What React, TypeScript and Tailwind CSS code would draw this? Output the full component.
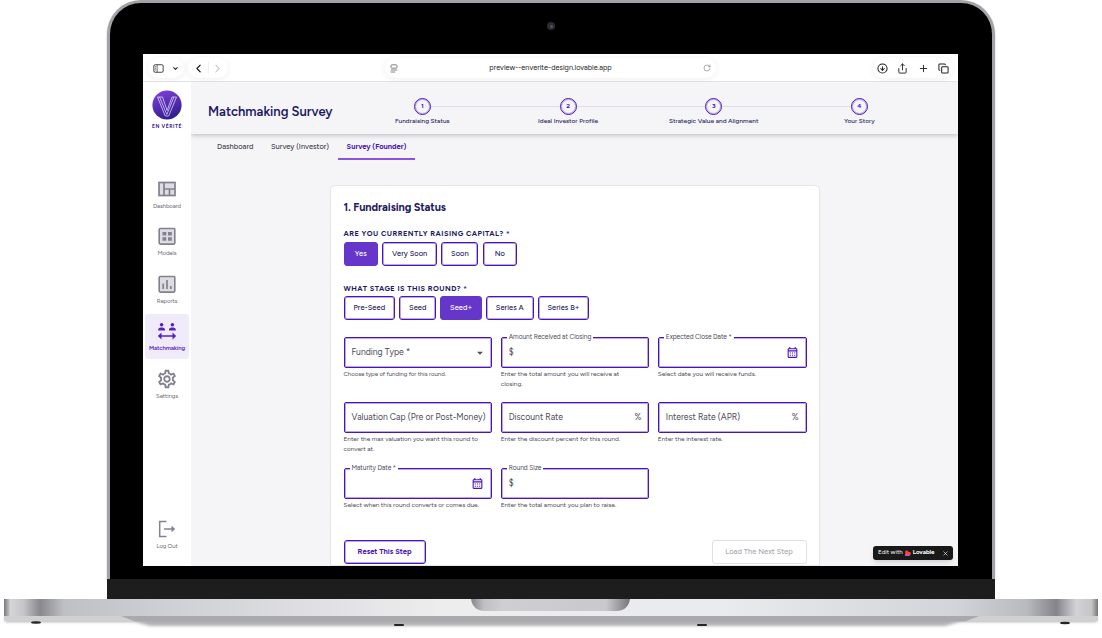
import type { ReactNode } from 'react';
import clsx from 'clsx';
import {
  ChevronDown,
  ChevronLeft,
  ChevronRight,
  CircleArrowDown,
  Copy,
  Plus,
  RotateCw,
  Share,
  X,
} from 'lucide-react';
import { MdArrowDropDown, MdOutlineCalendarMonth, MdOutlineSettings } from 'react-icons/md';

const QuiltIcon = () => (
  <svg viewBox="0 0 18 16" className="h-4 w-[18px]">
    <rect x="1" y="1.5" width="16" height="13" fill="#dcdce2" stroke="#83818f" strokeWidth="1.7" />
    <path d="M6 1.5v13M6 8h11M11.5 8v6.5" stroke="#83818f" strokeWidth="1.7" />
  </svg>
);

const ModelsIcon = () => (
  <svg viewBox="0 0 18 18" className="h-[18px] w-[18px]">
    <rect x="1.2" y="1.5" width="15.6" height="15.6" rx="1" fill="#dcdce2" stroke="#83818f" strokeWidth="1.6" />
    <path d="M4.5 5h3.8v3.5H4.5zM10 5h3.8v3.5H10zM4.5 10.300h3.800v3.500H4.500zM10 10.300h3.800v3.500H10z" fill="#83818f" />
  </svg>
);

const ReportsIcon = () => (
  <svg viewBox="0 0 18 18" className="h-[18px] w-[18px]">
    <rect x="1.2" y="1.5" width="15.6" height="15.6" rx="1" fill="#dcdce2" stroke="#83818f" strokeWidth="1.6" />
    <path d="M5.200 14V8.500M9 14V5M12.800 14v-3" stroke="#83818f" strokeWidth="1.700" />
  </svg>
);

const MatchIcon = () => (
  <svg viewBox="0 0 20 18" className="h-[18px] w-5" fill="#5b1fc0">
    <circle cx="4.6" cy="2.8" r="1.8" />
    <circle cx="15.4" cy="2.8" r="1.8" />
    <path d="M1.2 8.500V7.600C1.200 6.100 3.200 5.600 4.600 5.600S8 6.100 8 7.600v.9zM12 8.500v-.9c0-1.500 2-2 3.400-2s3.400.5 3.400 2v.9z" />
    <path d="M4.500 10.600v2.600h11v-2.600l3.700 3.400-3.700 3.400v-2.600h-11v2.600L.8 14z" />
  </svg>
);

const LogOutIcon = () => (
  <svg viewBox="0 0 18 18" className="h-[18px] w-[18px]" fill="none" stroke="#83818f" strokeWidth="1.500">
    <path d="M8.500 1.500H1.700v15h6.800M6 9h9.500" />
    <path d="M13.500 5.800L17.200 9l-3.700 3.200z" fill="#83818f" stroke="none" />
  </svg>
);

const navItems = [
  { label: 'Dashboard', icon: <QuiltIcon /> },
  { label: 'Models', icon: <ModelsIcon /> },
  { label: 'Reports', icon: <ReportsIcon /> },
  { label: 'Matchmaking', icon: <MatchIcon />, active: true },
  { label: 'Settings', icon: <MdOutlineSettings size={22} color="#83818f" /> },
];

const steps = ['Fundraising Status', 'Ideal Investor Profile', 'Strategic Value and Alignment', 'Your Story'];

const raising = [
  { label: 'Yes', width: 'w-[34.5px]', active: true },
  { label: 'Very Soon', width: 'w-[55px]' },
  { label: 'Soon', width: 'w-[37px]' },
  { label: 'No', width: 'w-[34.5px]' },
];

const stages = [
  { label: 'Pre-Seed', width: 'w-[51.5px]' },
  { label: 'Seed', width: 'w-[37px]' },
  { label: 'Seed+', width: 'w-[41.5px]', active: true },
  { label: 'Series A', width: 'w-[47.5px]' },
  { label: 'Series B+', width: 'w-[51.5px]' },
];

const Calendar = () => <MdOutlineCalendarMonth size={13} color="#4a14bd" />;

const fields = [
  {
    placeholder: 'Funding Type *',
    end: <MdArrowDropDown size={14} />,
    help: 'Choose type of funding for this round.',
    tightHelp: true,
  },
  { label: 'Amount Received at Closing', start: '$', help: 'Enter the total amount you will receive at closing.' },
  { label: 'Expected Close Date *', end: <Calendar />, help: 'Select date you will receive funds.' },
  { placeholder: 'Valuation Cap (Pre or Post-Money)', help: 'Enter the max valuation you want this round to convert at.' },
  { placeholder: 'Discount Rate', end: '%', help: 'Enter the discount percent for this round.' },
  { placeholder: 'Interest Rate (APR)', end: '%', help: 'Enter the interest rate.' },
  { label: 'Maturity Date *', end: <Calendar />, help: 'Select when this round converts or comes due.' },
  { label: 'Round Size', start: '$', help: 'Enter the total amount you plan to raise.' },
];

function BrowserBar() {
  return (
    <div className="flex h-7 shrink-0 items-center border-b border-[#e3e3e6] bg-white px-[5px] pt-px text-[#222]">
      <div className="flex h-5 w-[36px] items-center justify-between rounded-full px-[5px] shadow-[0_1px_6px_rgba(0,0,0,0.07)]">
        <svg viewBox="0 0 12 10" className="h-[9px] w-[11px]" fill="none" stroke="#333" strokeWidth="1">
          <rect x="0.8" y="0.8" width="10.4" height="8.4" rx="1.5" />
          <path d="M4.5 1v8M2 3h1.200M2 4.800h1.200M2 6.600h1.200" strokeWidth="0.800" />
        </svg>
        <ChevronDown size={7} strokeWidth={3.5} />
      </div>
      <div className="ml-1 flex h-5 w-10 items-center justify-between rounded-full px-1 shadow-[0_1px_6px_rgba(0,0,0,0.07)]">
        <ChevronLeft size={13} strokeWidth={2.2} />
        <span className="h-3 w-px bg-[#f0f0f0]" />
        <ChevronRight size={13} strokeWidth={1.8} className="text-[#aaa]" />
      </div>
      <div className="ml-[157px] flex h-5 w-[331px] items-center justify-between rounded-full px-[5px] shadow-[0_1px_7px_rgba(0,0,0,0.07)]">
        <svg viewBox="0 0 8 9" className="h-[9px] w-2" fill="none" stroke="#777" strokeWidth="0.9">
          <rect x="1" y="0.8" width="6" height="3.4" rx="0.8" />
          <path d="M0.7 6h6.600M0.700 8h4.500" />
        </svg>
        <span className="text-[7.3px] tracking-[0.02px] text-[#222]">preview--enverite-design.lovable.app</span>
        <RotateCw size={8} strokeWidth={1.8} className="text-[#777]" />
      </div>
      <div className="ml-auto flex h-5 w-20 items-center justify-between rounded-full px-1 shadow-[0_1px_6px_rgba(0,0,0,0.07)]">
        <CircleArrowDown size={11} strokeWidth={2.2} />
        <Share size={11} strokeWidth={2} />
        <Plus size={11} strokeWidth={2} />
        <Copy size={11} strokeWidth={2.2} />
      </div>
    </div>
  );
}

function Logo() {
  return (
    <div className="flex h-[89.5px] flex-col items-center pt-2">
      <svg viewBox="0 0 30 30" className="h-[30px] w-[30px]">
        <defs>
          <linearGradient id="logo" x1="0.3" y1="0" x2="0.7" y2="1">
            <stop offset="0" stopColor="#7c3fd6" />
            <stop offset="1" stopColor="#2b1a8c" />
          </linearGradient>
        </defs>
        <circle cx="15" cy="15" r="14.6" fill="url(#logo)" />
        <path
          d="M5.500 7h5l4.600 13.500L20 7h4.500l-7.800 19h-3.500zM7.500 7l7.300 17.500L21.900 7"
          fill="none"
          stroke="#e4dafa"
          strokeWidth="0.75"
        />
      </svg>
      <span className="mt-[3px] text-[5px] leading-[6px] font-bold tracking-[0.55px] text-[#3c2391]">EN VÉRITÉ</span>
    </div>
  );
}

function NavItem({ label, icon, active }: { label: string; icon: ReactNode; active?: boolean }) {
  return (
    <div
      className={clsx(
        'flex h-[45px] w-11 flex-col items-center rounded-[3px] pt-[6px]',
        active ? 'bg-[#f0ebf8] font-semibold text-[#5b1fc0]' : 'text-[#6c6a76]'
      )}
    >
      <div className="flex h-[22px] items-center">{icon}</div>
      <span className="mt-[2px] text-[6px] leading-[8px] tracking-[-0.1px]">{label}</span>
    </div>
  );
}

function Sidebar() {
  return (
    <div className="flex w-12 shrink-0 flex-col items-center bg-white">
      <Logo />
      <div className="flex flex-col gap-[2.6px]">
        {navItems.map((item) => (
          <NavItem key={item.label} {...item} />
        ))}
      </div>
      <div className="mt-auto mb-[9px]">
        <NavItem label="Log Out" icon={<LogOutIcon />} />
      </div>
    </div>
  );
}

function Header() {
  return (
    <div className="z-10 flex h-[52px] shrink-0 items-center bg-[#f5f5f8] pl-[17px] shadow-[0_1px_5px_rgba(0,0,0,0.25)]">
      <h1 className="w-[141.5px] pt-[8px] text-[13px] font-semibold whitespace-nowrap text-[#1d1a63]">
        Matchmaking Survey
      </h1>
      <div className="flex">
        {steps.map((step, i) => (
          <div key={step} className="flex w-[145.7px] flex-col items-center pt-[8px]">
            <div className="flex w-full items-center">
              <span className={clsx('h-px flex-1', i > 0 && 'bg-[#dddde3]')} />
              <span className="flex h-[17px] w-[17px] items-center justify-center rounded-full border border-[#4a14bd] text-[6.5px] font-bold text-[#4a14bd] shadow-[inset_0_0_0_1px_#4a14bd50]">
                {i + 1}
              </span>
              <span className={clsx('h-px flex-1', i < 3 && 'bg-[#dddde3]')} />
            </div>
            <span className="mt-[1.5px] text-[6.52px] leading-[9px] font-medium whitespace-nowrap text-[#1d1a63]">
              {step}
            </span>
          </div>
        ))}
      </div>
    </div>
  );
}

function Tabs() {
  return (
    <div className="flex h-[26px] shrink-0 pl-[18px] text-[7.5px] font-medium text-[#44434f]">
      <span className="w-[53px] pt-[7px] pl-2">Dashboard</span>
      <span className="w-[76px] pt-[7px] pl-[9px]">Survey (Investor)</span>
      <span className="w-[77px] border-b-2 border-[#8a55dc] pt-[7px] text-center font-bold tracking-[-0.01px] text-[#4a14bd]">
        Survey (Founder)
      </span>
    </div>
  );
}

function Choices({ items }: { items: { label: string; width: string; active?: boolean }[] }) {
  return (
    <div className="flex gap-[4.2px]">
      {items.map((item) => (
        <button
          key={item.label}
          className={clsx(
            'h-6 shrink-0 rounded-[3px] border text-[7.5px] font-medium tracking-[0.03px] whitespace-nowrap',
            item.width,
            item.active
              ? 'border-[#6236c8] bg-[#6636ca] text-white'
              : 'border-[#4a14bd] text-[#1d1a63] shadow-[inset_0_0_0_1px_#4a14bd60]'
          )}
        >
          {item.label}
        </button>
      ))}
    </div>
  );
}

type FieldProps = {
  label?: string;
  placeholder?: string;
  start?: string;
  end?: ReactNode;
  help: string;
  tightHelp?: boolean;
};

function Field({ label, placeholder, start, end, help, tightHelp }: FieldProps) {
  return (
    <div className="text-[#4c4a58]">
      <div className="relative flex h-[31px] items-center justify-between rounded-[2px] border border-[#4a14bd] px-[7px] text-[8.65px] whitespace-nowrap shadow-[inset_0_0_0_1px_#4a14bd60]">
        {label && (
          <span className="absolute -top-[6px] left-[5px] bg-white px-[2px] text-[6.6px] leading-[10px] tracking-[-0.05px]">
            {label}
          </span>
        )}
        <span>{placeholder ?? start}</span>
        <span className={clsx(end !== '%' && '-mr-[3px]', label && 'mr-0')}>{end}</span>
      </div>
      <p
        className={clsx(
          'mt-px pr-3 leading-[10px]',
          tightHelp ? 'text-[6.1px] tracking-[-0.05px]' : 'text-[6.5px] tracking-[-0.02px]'
        )}
      >
        {help}
      </p>
    </div>
  );
}

function SurveyCard() {
  return (
    <div className="mt-[25px] ml-[139px] flex h-[400px] w-[490px] flex-col rounded-t-[5px] border border-[#e4e4ec] bg-white px-[12.5px] pt-[13px]">
      <h2 className="h-[29px] text-[11px] leading-[18px] font-bold tracking-[-0.08px] text-[#1d1a63]">
        1. Fundraising Status
      </h2>
      <p className="h-[14px] text-[7.4px] leading-[12px] font-bold tracking-[0.47px] text-[#1d1a63]">
        ARE YOU CURRENTLY RAISING CAPITAL? *
      </p>
      <Choices items={raising} />
      <p className="mt-[17px] h-[13px] text-[7.4px] leading-[12px] font-bold tracking-[0.47px] text-[#1d1a63]">
        WHAT STAGE IS THIS ROUND? *
      </p>
      <Choices items={stages} />
      <div className="mt-[17px] grid auto-rows-[65.3px] grid-cols-3 gap-x-[8.5px]">
        {fields.map((field) => (
          <Field key={field.help} {...field} />
        ))}
      </div>
      <div className="mt-[7px] flex justify-between text-[7.55px]">
        <button className="h-6 w-[82px] rounded-[3px] border border-[#4a14bd] font-bold text-[#4a14bd] shadow-[inset_0_0_0_1px_#4a14bd60]">
          Reset This Step
        </button>
        <button className="h-6 w-[95px] rounded-[3px] border border-[#e0e0e3] font-medium text-[#aaaab0]">
          Load The Next Step
        </button>
      </div>
    </div>
  );
}

function LovableBadge() {
  return (
    <div className="absolute right-[5px] bottom-[6px] flex h-[14px] w-20 items-center rounded-[3px] bg-[#191919] pl-[5px] text-[6.2px] text-white shadow-md">
      <span>Edit with</span>
      <svg viewBox="0 0 6 6" className="mr-[1.5px] ml-[2.5px] h-[6px] w-[6px]">
        <path d="M0.3 6V1.500C0.300 0 3 0 3.200 1.800 5 1.300 6.500 3 5.600 4.400 5 5.500 3.500 6 3 6z" fill="#ff4530" />
        <path d="M0.3 6V3.500L4.800 5.200C4 5.900 3.500 6 3 6z" fill="#c04df5" />
      </svg>
      <span className="font-bold tracking-[-0.05px]">Lovable</span>
      <X size={7} strokeWidth={2} className="mr-[4px] ml-auto" />
    </div>
  );
}

function Screen() {
  return (
    <div className="relative ml-[33px] flex h-[512px] w-[815px] flex-col overflow-hidden bg-[#f5f5f8]">
      <BrowserBar />
      <div className="flex min-h-0 flex-1">
        <Sidebar />
        <div className="flex min-w-0 flex-1 flex-col overflow-hidden">
          <Header />
          <Tabs />
          <SurveyCard />
        </div>
      </div>
      <LovableBadge />
    </div>
  );
}

function LaptopBase() {
  return (
    <svg viewBox="0 0 1102 39" className="block h-[39px] w-[1102px]">
      <defs>
        <linearGradient id="metal">
          <stop offset="0" stopColor="#77777a" />
          <stop offset="0.006" stopColor="#d5d5d7" />
          <stop offset="0.018" stopColor="#c5c5c8" />
          <stop offset="0.033" stopColor="#88888d" />
          <stop offset="0.055" stopColor="#bfc0c4" />
          <stop offset="0.15" stopColor="#cfd0d3" />
          <stop offset="0.4" stopColor="#ededee" />
          <stop offset="0.65" stopColor="#eaebed" />
          <stop offset="0.87" stopColor="#d3d4d7" />
          <stop offset="0.935" stopColor="#b9babd" />
          <stop offset="0.962" stopColor="#84848a" />
          <stop offset="0.98" stopColor="#d3d3d6" />
          <stop offset="0.994" stopColor="#c5c5c8" />
          <stop offset="1" stopColor="#77777a" />
        </linearGradient>
        <linearGradient id="notch">
          <stop offset="0" stopColor="#85858a" />
          <stop offset="0.08" stopColor="#c0c0c3" />
          <stop offset="0.2" stopColor="#cfcfd1" />
          <stop offset="0.85" stopColor="#c9c9cc" />
          <stop offset="1" stopColor="#77777b" />
        </linearGradient>
        <filter id="soft" x="-5%" y="-100%" width="110%" height="300%">
          <feGaussianBlur stdDeviation="1.5" />
        </filter>
      </defs>
      <path d="M5 17h1092v6H960l-15 4H150l-15-4H5z" fill="#000" opacity="0.3" filter="url(#soft)" />
      <rect x="4" y="17" width="1094" height="5" fill="#d0d0d1" />
      <rect x="4" y="0" width="1094" height="17" fill="url(#metal)" />
      <path d="M121 17h858l-10 4q-3 1.500-8 1.500H139q-5 0-8-1.500z" fill="#a9a9ae" />
      <path d="M471 0h159q-2 12-14 12H485q-12 0-14-12z" fill="url(#notch)" />
      <g fill="#252528">
        <ellipse cx="36" cy="23.5" rx="5" ry="1.2" />
        <rect x="394" y="25" width="10" height="2" rx="1" />
        <rect x="697" y="25" width="10" height="2" rx="1" />
        <ellipse cx="1065" cy="24" rx="5" ry="1.2" />
      </g>
    </svg>
  );
}

export default function App() {
  return (
    <div className="h-[638px] w-[1102px] overflow-hidden bg-white font-['Figtree','Inter',sans-serif]">
      <div className="mx-auto h-[579px] w-[888px] rounded-t-[34px] border-[3px] border-b-0 border-[#a2a3a7] bg-black shadow-[0_1px_2px_rgba(0,0,0,0.25)]">
        <div className="flex h-[51px] items-center justify-center">
          <span className="mb-[5px] flex h-2 w-2 items-center justify-center rounded-full bg-[#2b2c30]">
            <span className="h-[3px] w-[3px] rounded-full bg-[#4e5867]" />
          </span>
        </div>
        <Screen />
      </div>
      <div className="mx-auto h-5 w-[888px] bg-[#1d1d1d]" />
      <LaptopBase />
    </div>
  );
}
